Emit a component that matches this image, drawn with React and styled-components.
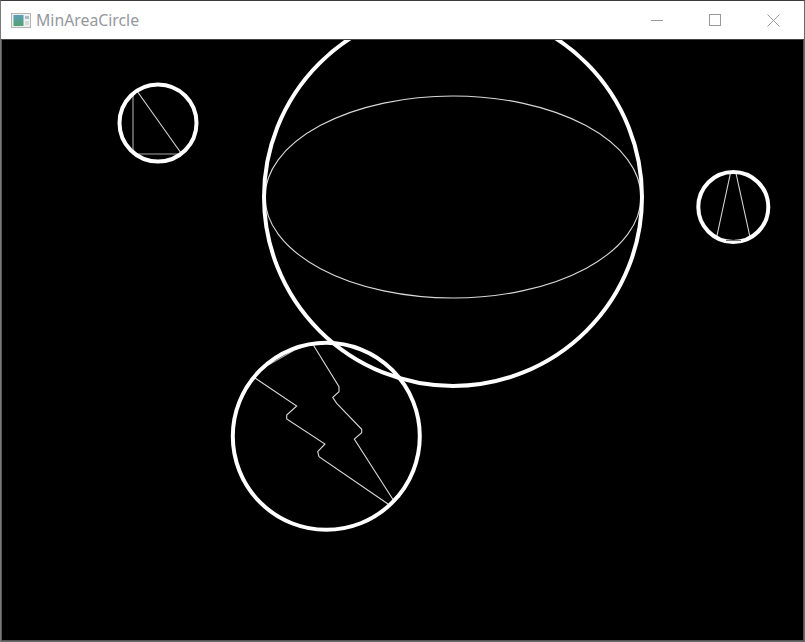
import React from "react";
import styled, { createGlobalStyle } from "styled-components";

const GlobalStyle = createGlobalStyle`
  html, body {
    margin: 0;
    padding: 0;
    background: #000;
  }
`;

const Window = styled.div`
  width: 805px;
  height: 642px;
  box-sizing: border-box;
  display: flex;
  flex-direction: column;
  overflow: hidden;
  background: #000;
  border-top: 1px solid #3c3c3c;
  border-left: 1px solid #7a7a7a;
  border-right: 1px solid #6a6a6a;
  border-bottom: 1px solid #6a6a6a;
`;

const TitleBar = styled.div`
  height: 38px;
  flex: none;
  display: flex;
  align-items: center;
  background: #fff;
  border-bottom: 1px solid #444;
`;

const AppIcon = styled.svg`
  width: 20px;
  height: 15px;
  margin-left: 10px;
  flex: none;
`;

const Title = styled.span`
  margin-left: 5px;
  font: 15.8px "Noto Sans", "Open Sans", sans-serif;
  color: #94979e;
`;

const Controls = styled.div`
  margin-left: auto;
  margin-right: 2px;
  display: flex;
  height: 100%;
`;

const ControlButton = styled.div`
  width: 58px;
  height: 100%;
  display: flex;
  align-items: center;
  justify-content: center;
`;

const Canvas = styled.svg`
  display: block;
  box-sizing: content-box;
  flex: none;
  width: 801px;
  height: 600px;
  background: #000;
  border-left: 1px solid #555;
  border-right: 1px solid #555;
  border-bottom: 1px solid #555;
`;

const Thick = styled.circle`
  fill: none;
  stroke: #fff;
  stroke-width: 4;
`;

const Thin = styled.polyline`
  fill: none;
  stroke: ${props => props.$color || "#d8d8d8"};
  stroke-width: 1.1;
`;

const Oval = styled.ellipse`
  fill: none;
  stroke: #d8d8d8;
  stroke-width: 1.1;
`;

const circles = [
  { cx: 453, cy: 197, r: 189 },
  { cx: 158, cy: 123, r: 38.5 },
  { cx: 733.3, cy: 207, r: 35 },
  { cx: 326.3, cy: 436.3, r: 93.5 },
];

const shapes = [
  { points: "133,93 133,154 180,154", color: "#a8a8a8" },
  { points: "137,91 181,153" },
  { points: "730.7,172 716.7,237" },
  { points: "735.7,172 750,237" },
  { points: "255,378 296.7,406 286.7,415 286.7,419 325,444 317.7,451.7 319,456.7 388,504" },
  { points: "313.3,345 339,386.7 339,391.7 332.7,397.3 336.7,403.3 361.7,429.3 361.7,432.7 354.3,439 393.3,500" },
  { points: "268.3,365 293.3,350.7", color: "#a8a8a8" },
];

const App = () => (
  <>
    <GlobalStyle />
    <Window>
      <TitleBar>
        <AppIcon viewBox="0 0 20 15">
          <defs>
            <linearGradient id="iconFill" x1="0" y1="0" x2="0" y2="1">
              <stop offset="0" stopColor="#5aa0b8" />
              <stop offset="1" stopColor="#55a070" />
            </linearGradient>
          </defs>
          <rect x="0.5" y="0.5" width="19" height="14" fill="#eef0f0" stroke="#b4b4b4" />
          <rect x="2.5" y="2" width="10" height="11" fill="url(#iconFill)" />
          <rect x="14" y="3" width="4" height="3" fill="#a8bcc4" />
          <rect x="14" y="8" width="4" height="4" fill="#d4dcd8" />
        </AppIcon>
        <Title>MinAreaCircle</Title>
        <Controls>
          <ControlButton>
            <svg width="12" height="12" viewBox="0 0 12 12">
              <path d="M0 6.5H12" stroke="#999" fill="none" />
            </svg>
          </ControlButton>
          <ControlButton>
            <svg width="12" height="12" viewBox="0 0 12 12">
              <rect x="0.5" y="0.5" width="11" height="11" stroke="#999" fill="none" />
            </svg>
          </ControlButton>
          <ControlButton>
            <svg width="13" height="13" viewBox="0 0 13 13">
              <path d="M0.5 0.5L12.5 12.5M12.5 0.5L0.5 12.5" stroke="#999" fill="none" />
            </svg>
          </ControlButton>
        </Controls>
      </TitleBar>
      <Canvas viewBox="2 40 801 600">
        <Oval cx="453" cy="197" rx="188" ry="101" />
        {shapes.map(s => (
          <Thin key={s.points} points={s.points} $color={s.color} />
        ))}
        {circles.map(c => (
          <Thick key={c.cx} cx={c.cx} cy={c.cy} r={c.r} />
        ))}
        <Thin points="726,240.5 741,240.5" $color="#707070" />
      </Canvas>
    </Window>
  </>
);

export default App;
